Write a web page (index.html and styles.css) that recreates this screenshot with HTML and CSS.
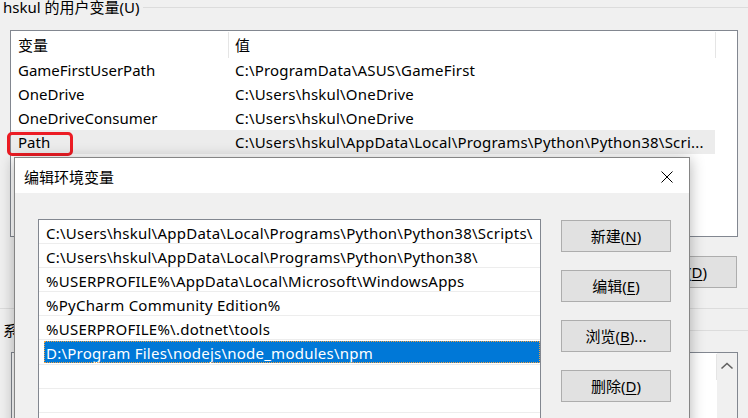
FILE: index.html
```html
<!DOCTYPE html>
<html lang="zh-CN">
<head>
<meta charset="utf-8">
<title>编辑环境变量</title>
<link rel="stylesheet" href="styles.css">
</head>
<body>
<div class="screen">
  <div class="group-head">
    <span class="group-label">hskul 的用户变量(U)</span>
    <div class="rule"></div>
  </div>

  <div class="listview user-list">
    <div class="lv-header">
      <div class="lv-col c1">变量</div>
      <div class="lv-col c2">值</div>
    </div>
    <div class="lv-row">
      <div class="lv-cell c1">GameFirstUserPath</div>
      <div class="lv-cell c2">C:\ProgramData\ASUS\GameFirst</div>
    </div>
    <div class="lv-row">
      <div class="lv-cell c1">OneDrive</div>
      <div class="lv-cell c2">C:\Users\hskul\OneDrive</div>
    </div>
    <div class="lv-row">
      <div class="lv-cell c1">OneDriveConsumer</div>
      <div class="lv-cell c2">C:\Users\hskul\OneDrive</div>
    </div>
    <div class="lv-row is-hl">
      <div class="lv-cell c1">Path</div>
      <div class="lv-cell c2">C:\Users\hskul\AppData\Local\Programs\Python\Python38\Scri...</div>
    </div>
  </div>

  <div class="btn-row">
    <div class="btn">删除(<u>D</u>)</div>
  </div>

  <div class="rule group-end"></div>

  <div class="group-head lower">
    <span class="group-label">系统变量(S)</span>
    <div class="rule"></div>
  </div>

  <div class="listview sys-list">
    <div class="sys-main">
      <div class="lv-header">
        <div class="lv-col c1">变量</div>
        <div class="lv-col c2">值</div>
      </div>
    </div>
    <div class="scrollbar">
      <svg class="sb-arrow" width="14" height="10" viewBox="0 0 14 10"><path d="M1.5 7.5 L7 2.5 L12.5 7.5" fill="none" stroke="#606060" stroke-width="1.6"/></svg>
    </div>
  </div>

  <div class="redbox"></div>

  <div class="dialog">
    <div class="titlebar">
      <span class="title">编辑环境变量</span>
      <div class="close">
        <svg width="12" height="12" viewBox="0 0 12 12"><path d="M0.5 0.5 L11.5 11.5 M11.5 0.5 L0.5 11.5" stroke="#000" stroke-width="1" fill="none"/></svg>
      </div>
    </div>
    <div class="dlg-body">
      <div class="path-list">
        <div class="pl-row"><div class="pl-item">C:\Users\hskul\AppData\Local\Programs\Python\Python38\Scripts\</div></div>
        <div class="pl-row"><div class="pl-item">C:\Users\hskul\AppData\Local\Programs\Python\Python38\</div></div>
        <div class="pl-row"><div class="pl-item">%USERPROFILE%\AppData\Local\Microsoft\WindowsApps</div></div>
        <div class="pl-row"><div class="pl-item">%PyCharm Community Edition%</div></div>
        <div class="pl-row"><div class="pl-item">%USERPROFILE%\.dotnet\tools</div></div>
        <div class="pl-row"><div class="pl-item is-sel">D:\Program Files\nodejs\node_modules\npm</div></div>
        <div class="pl-row"><div class="pl-item"></div></div>
        <div class="pl-row"><div class="pl-item"></div></div>
      </div>
      <div class="dlg-buttons">
        <div class="btn">新建(<u>N</u>)</div>
        <div class="btn">编辑(<u>E</u>)</div>
        <div class="btn">浏览(<u>B</u>)...</div>
        <div class="btn">删除(<u>D</u>)</div>
      </div>
    </div>
  </div>
</div>
</body>
</html>
```

FILE: styles.css
```css
* { box-sizing: border-box; }

html, body {
  margin: 0;
  padding: 0;
}

body {
  width: 748px;
  height: 418px;
  overflow: hidden;
  background: #f0f0f0;
  font-family: "Noto Sans", "Noto Sans CJK SC", sans-serif;
  font-size: 15px;
  color: #000;
}

.screen {
  position: relative;
  width: 748px;
  height: 418px;
  overflow: hidden;
}

.group-head {
  display: flex;
  align-items: center;
  height: 15px;
}

.group-label {
  padding-left: 3px;
  line-height: 15px;
  white-space: nowrap;
}

.rule {
  height: 1px;
  background: #dcdcdc;
}

.group-head .rule {
  flex: 1;
  margin-left: 4px;
}

.listview {
  background: #fff;
  border: 1px solid #828790;
}

.user-list {
  margin: 15px 0 0 10px;
  width: 728px;
  height: 207px;
}

.lv-header {
  display: flex;
  height: 27px;
  line-height: 27px;
}

.lv-col {
  border-right: 1px solid #e5e5e5;
  margin: 1px 0 0;
  line-height: 26px;
  white-space: nowrap;
}

.c1 {
  width: 218px;
  padding-left: 7px;
  flex: none;
}

.c2 {
  width: 487px;
  padding-left: 6px;
  flex: none;
}

.lv-row {
  display: flex;
  height: 24px;
  line-height: 24px;
  width: 704px;
}

.lv-row.is-hl {
  background: #ececec;
}

.lv-cell {
  white-space: nowrap;
  overflow: hidden;
}

.lv-cell.c2 {
  letter-spacing: 0.2px;
}

.btn-row {
  display: flex;
  justify-content: flex-end;
  margin-top: 19px;
  padding-right: 11px;
}

.btn {
  width: 110px;
  height: 32px;
  background: #e1e1e1;
  border: 1px solid #adadad;
  display: flex;
  align-items: center;
  justify-content: center;
  white-space: nowrap;
  line-height: 20px;
}

.btn u {
  text-decoration: underline;
  text-underline-offset: 2px;
}

.group-end {
  margin-top: 20px;
}

.group-head.lower {
  margin-top: 14px;
}

.sys-list {
  margin: 14px 0 0 11px;
  width: 727px;
  height: 120px;
  display: flex;
}

.sys-main {
  flex: 1;
}

.scrollbar {
  width: 21px;
  background: #f0f0f0;
  display: flex;
  justify-content: center;
  padding-top: 8px;
}

.sb-arrow {
  display: block;
}

.redbox {
  position: absolute;
  left: 7px;
  top: 132px;
  width: 66px;
  height: 24px;
  border: 3px solid #ec1c24;
  border-radius: 5px;
}

.dialog {
  position: absolute;
  left: 14px;
  top: 157px;
  width: 676px;
  height: 300px;
  background: #f0f0f0;
  border: 1px solid #858585;
  box-shadow: 0 2px 14px rgba(0, 0, 0, 0.3);
}

.titlebar {
  display: flex;
  justify-content: space-between;
  align-items: center;
  height: 35px;
  background: #fff;
}

.title {
  padding-left: 9px;
  line-height: 20px;
  margin-top: 2px;
}

.close {
  width: 45px;
  height: 35px;
  display: flex;
  align-items: center;
  justify-content: center;
  padding-top: 2px;
}

.close svg { display: block; }

.dlg-body {
  display: flex;
  align-items: flex-start;
  padding: 26px 0 0 23px;
}

.path-list {
  width: 503px;
  height: 220px;
  background: #fff;
  border: 1px solid #828790;
  overflow: hidden;
  flex: none;
}

.pl-row {
  height: 24px;
  border-bottom: 1px solid #ededed;
  padding-left: 5px;
}

.pl-item {
  height: 23px;
  padding: 2px 0 0 2px;
  line-height: 22px;
  white-space: nowrap;
  overflow: hidden;
  letter-spacing: 0.24px;
}

.pl-item.is-sel {
  margin-top: 1px;
  height: 22px;
  padding-top: 1px;
  background: #0078d7;
  color: #fff;
  outline: 1px dotted #f0a040;
  outline-offset: -1px;
}

.dlg-buttons {
  display: flex;
  flex-direction: column;
  gap: 18px;
  margin: 1px 0 0 20px;
}
```
